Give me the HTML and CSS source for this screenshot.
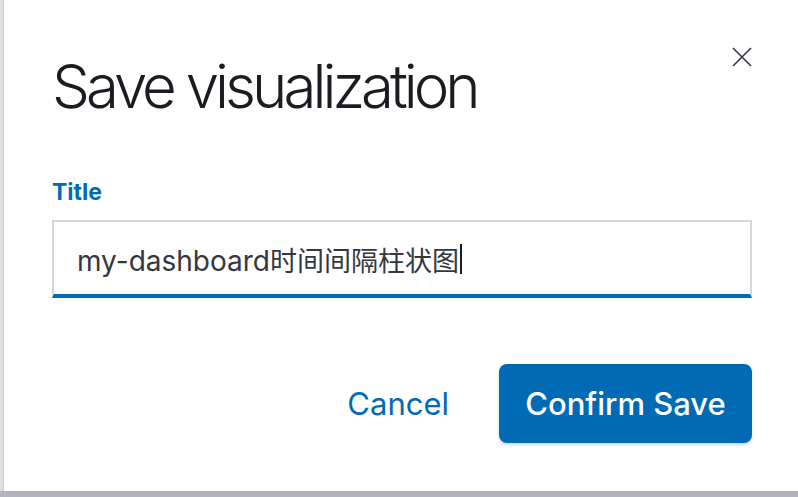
FILE: index.html
```html
<!DOCTYPE html>
<html lang="en">
<head>
<meta charset="utf-8">
<title>Save visualization</title>
<link rel="stylesheet" href="styles.css">
</head>
<body>
<div class="modal">
  <div class="header">
    <h1 class="title">Save visualization</h1>
    <button class="close" aria-label="Close">
      <svg width="22" height="22" viewBox="0 0 22 22"><path d="M2 2 L20 20 M20 2 L2 20" stroke="#343741" stroke-width="1.6" fill="none"/></svg>
    </button>
  </div>
  <div class="body">
    <label class="label">Title</label>
    <div class="input"><span class="value">my-dashboard<span class="cjk">时间间隔柱状图</span></span><span class="caret"></span></div>
  </div>
  <div class="footer">
    <button class="cancel">Cancel</button>
    <button class="confirm">Confirm Save</button>
  </div>
</div>
</body>
</html>
```
FILE: styles.css
```css
html, body {
  margin: 0;
  padding: 0;
  width: 798px;
  height: 497px;
  overflow: hidden;
  background: #b1b4bc;
  font-family: Inter, "Noto Sans CJK SC", sans-serif;
}
.modal {
  box-sizing: border-box;
  margin-left: 3px;
  width: 830px;
  height: 491px;
  background: #fff;
  border-left: 1px solid #c9ccd2;
  padding: 0 0 0 48px;
  display: flex;
  flex-direction: column;
  box-shadow: -3px 0 0 #dcdee2;
}
.header {
  display: flex;
  align-items: flex-start;
  width: 700px;
  justify-content: space-between;
  padding-top: 50px;
}
.title {
  margin: 0;
  font-size: 60px;
  font-weight: 300;
  line-height: 72px;
  color: #1a1c21;
  letter-spacing: -4px;
}
.close {
  border: 0;
  background: none;
  padding: 0;
  margin: -4px -1px 0 0;
  width: 22px;
  height: 22px;
  cursor: pointer;
}
.body {
  display: flex;
  flex-direction: column;
  width: 700px;
  padding-top: 56px;
}
.label {
  font-size: 23px;
  font-weight: 700;
  color: #006bb4;
  line-height: 28px;
  margin-bottom: 14px;
}
.input {
  box-sizing: border-box;
  height: 78px;
  border: 2px solid #d3d6dc;
  border-bottom: 4px solid #006bb4;
  background: #fff;
  display: flex;
  align-items: center;
  padding-left: 23px;
  padding-top: 2px;
  font-size: 28px;
  color: #343741;
}
.cjk {
  font-family: "Noto Sans CJK SC", sans-serif;
  font-size: 27px;
}
.caret {
  display: inline-block;
  width: 2px;
  height: 30px;
  background: #1a1c21;
  margin-left: 1px;
}
.footer {
  display: flex;
  justify-content: flex-end;
  align-items: center;
  width: 700px;
  padding-top: 66px;
  gap: 50px;
}
.cancel {
  border: 0;
  background: none;
  padding: 0;
  font-family: inherit;
  font-size: 31px;
  color: #006bb4;
  cursor: pointer;
}
.confirm {
  border: 0;
  height: 79px;
  width: 253px;
  border-radius: 8px;
  background: #006bb4;
  color: #fff;
  font-family: inherit;
  font-size: 31px;
  font-weight: 500;
  box-shadow: 0 2px 3px rgba(0, 60, 110, 0.2);
  cursor: pointer;
}
```
